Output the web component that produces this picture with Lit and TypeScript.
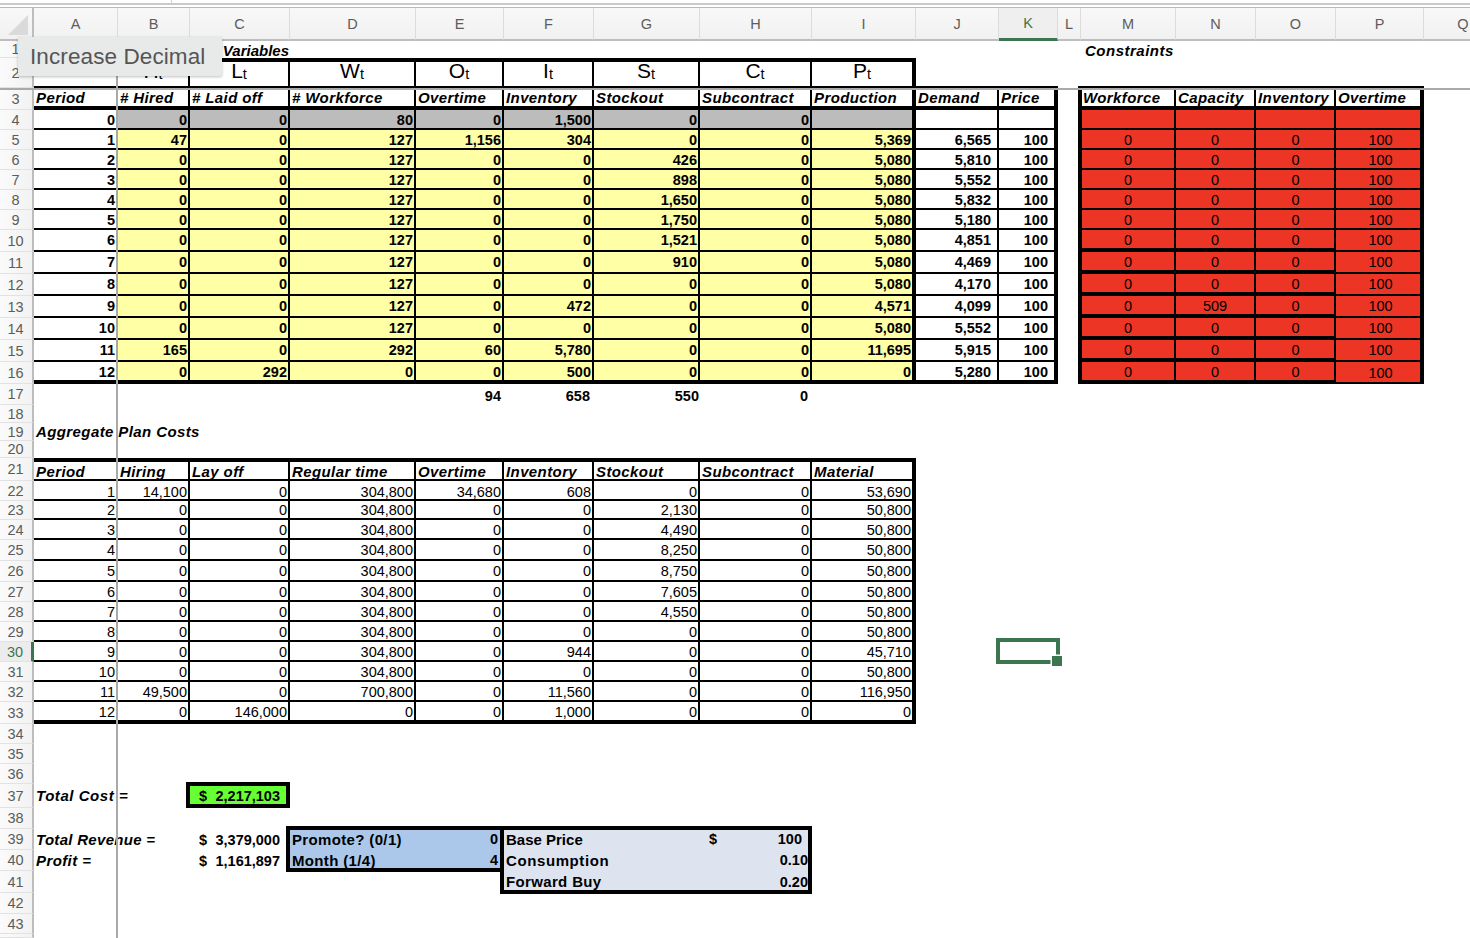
import { LitElement, html, css } from "lit";
import { customElement } from "lit/decorators.js";

const colEdges = [0, 34, 118, 190, 290, 416, 504, 594, 700, 812, 916, 999, 1058, 1081, 1176, 1256, 1336, 1424, 1503];
const rowEdges = [0, 8, 41, 58, 88, 110, 130, 150, 170, 190, 210, 230, 252, 274, 296, 318, 340, 362, 384, 405, 423, 441, 458, 481, 501, 520, 540, 561, 582, 602, 622, 642, 662, 682, 702, 724, 744, 764, 784, 808, 829, 850, 871, 893, 914, 934, 938];
const tpl = (e: number[]) => e.slice(1).map((v, i) => `${v - e[i]}px`).join(" ");
const colLetters = "ABCDEFGHIJKLMNOPQ".split("");
// grid helpers: col 1 = row header, col 2 = A; row 1 = strip, row 2 = col header, row 3 = sheet row 1
const gc = (c: number, span = 1) => `grid-column:${c + 2}/span ${span}`;
const gr = (r: number, span = 1) => `grid-row:${r + 2}/span ${span}`;
const fmt = (v: number | string) => (typeof v === "number" ? v.toLocaleString("en-US") : v);

const plan: (number | string)[][] = [
  [1, 47, 0, 127, 1156, 304, 0, 0, 5369, 6565, 100],
  [2, 0, 0, 127, 0, 0, 426, 0, 5080, 5810, 100],
  [3, 0, 0, 127, 0, 0, 898, 0, 5080, 5552, 100],
  [4, 0, 0, 127, 0, 0, 1650, 0, 5080, 5832, 100],
  [5, 0, 0, 127, 0, 0, 1750, 0, 5080, 5180, 100],
  [6, 0, 0, 127, 0, 0, 1521, 0, 5080, 4851, 100],
  [7, 0, 0, 127, 0, 0, 910, 0, 5080, 4469, 100],
  [8, 0, 0, 127, 0, 0, 0, 0, 5080, 4170, 100],
  [9, 0, 0, 127, 0, 472, 0, 0, 4571, 4099, 100],
  [10, 0, 0, 127, 0, 0, 0, 0, 5080, 5552, 100],
  [11, 165, 0, 292, 60, 5780, 0, 0, 11695, 5915, 100],
  [12, 0, 292, 0, 0, 500, 0, 0, 0, 5280, 100],
];
const costs: number[][] = [
  [1, 14100, 0, 304800, 34680, 608, 0, 0, 53690],
  [2, 0, 0, 304800, 0, 0, 2130, 0, 50800],
  [3, 0, 0, 304800, 0, 0, 4490, 0, 50800],
  [4, 0, 0, 304800, 0, 0, 8250, 0, 50800],
  [5, 0, 0, 304800, 0, 0, 8750, 0, 50800],
  [6, 0, 0, 304800, 0, 0, 7605, 0, 50800],
  [7, 0, 0, 304800, 0, 0, 4550, 0, 50800],
  [8, 0, 0, 304800, 0, 0, 0, 0, 50800],
  [9, 0, 0, 304800, 0, 944, 0, 0, 45710],
  [10, 0, 0, 304800, 0, 0, 0, 0, 50800],
  [11, 49500, 0, 700800, 0, 11560, 0, 0, 116950],
  [12, 0, 146000, 0, 0, 1000, 0, 0, 0],
];

@customElement("app-root")
export class AppRoot extends LitElement {
  static styles = css`
    :host { display: block; position: relative; width: 1470px; height: 938px; overflow: hidden; background: #fff; font-family: "Liberation Sans", Arial, sans-serif; color: #000; }
    .sheet { display: grid; width: 1503px; height: 938px; }
    .strip { grid-column: 1 / -1; grid-row: 1; background: #fff; box-sizing: border-box; }
    .strip-tick { width: 172px; height: 3px; box-sizing: border-box; border-right: 1px solid #cfcfcf; }
    .strip-lines { box-sizing: border-box; border-top: 2px solid #c9c9c9; border-bottom: 1px solid #b9b9b9; height: 5px; }
    .ch { display: flex; align-items: center; justify-content: center; background: linear-gradient(#f8f8f8, #f1f1f1); border-right: 1px solid #dcdcdc; border-bottom: 2px solid #bdbdbd; box-sizing: border-box; color: #5c5c5c; font-size: 14.5px; }
    .ch.on { background: #efefef; color: #3c7650; border-bottom: 3px solid #3c7650; }
    .corner { background: linear-gradient(#f8f8f8, #f1f1f1); border-right: 2px solid #bdbdbd; border-bottom: 2px solid #bdbdbd; box-sizing: border-box; display: flex; align-items: flex-end; justify-content: flex-end; padding: 0 4px 4px 0; }
    .rh { display: flex; align-items: center; justify-content: center; background: linear-gradient(90deg, #fbfbfb, #f2f2f2); border-right: 2px solid #bdbdbd; border-bottom: 1px solid #e2e2e2; box-sizing: border-box; color: #5c5c5c; font-size: 14.5px; padding-right: 1px; }
    .rh.on { color: #3c7650; background: #ececec; border-right: 3px solid #3c7650; }
    .c { display: flex; align-items: center; min-width: 0; white-space: nowrap; box-sizing: border-box; font-size: 14.5px; line-height: 1; z-index: 1; }
    .r { justify-content: flex-end; padding-right: 1px; }
    .pa { padding-right: 3px; }
    .l { padding-left: 2px; }
    .ctr { justify-content: center; }
    .b { font-weight: 700; }
    .hd { font-weight: 700; font-style: italic; font-size: 15px; padding-left: 2px; letter-spacing: 0.4px; }
    .lin { border-right: 2px solid #000; border-bottom: 2px solid #000; padding-top: 2px; }
    .lin.top0 { padding-top: 0; }
    .lin.top4 { padding-top: 4px; }
    .hd.h3 { padding-top: 0; }
    .bb4 { border-bottom-width: 4px; }
    .br4 { border-right-width: 4px; }
    .bt4 { border-top: 4px solid #000; }
    .nor { border-right: 0; }
    .yellow { background: #ffffa6; }
    .gray { background: #bcbcbc; }
    .red { background: #ec3524; }
    .sym { font-size: 21px; font-weight: 400; justify-content: center; align-items: flex-end; padding: 0 0 5px; line-height: 1; }
    .sym span { font-size: 14.5px; }
    .pj { padding-right: 6px; }
    .pk { padding-right: 6px; }
    .ppl { padding-left: 1px; }
    .top1 { padding-top: 1px; }
    .acct.top1 { padding-top: 2px; }
    .top2 { padding-top: 4px; }
    .up { padding-bottom: 2px; }
    .wide { letter-spacing: 0.55px; }
    .lean { letter-spacing: 0.3px; }
    .plain { letter-spacing: 0; padding-right: 1px; }
    .cons { letter-spacing: 0.5px; padding-left: 4px; }
    .p3 { padding-right: 3px; }
    .p4 { padding-right: 4px; }
    .frame { box-sizing: border-box; border: 4px solid #000; z-index: 2; pointer-events: none; }
    .f-red { margin: -2px 0 0 -3px; border-top-width: 3px; border-bottom-width: 2px; }
    .block { box-sizing: border-box; border: 4px solid #000; z-index: 0; }
    .green { background: #66ff33; margin: -2px 0 0 -4px; }
    .blue { background: #abc8ea; margin: -3px 0 -1px -4px; }
    .pale { background: #dde4f0; margin: -3px 0 -1px -4px; }
    .lab { font-weight: 700; font-size: 15px; letter-spacing: 0.35px; padding-bottom: 1px; }
    .tight { letter-spacing: 0; }
    .spaced { letter-spacing: 0.6px; }
    .acct { justify-content: space-between; padding: 0 10px 0 9px; font-weight: 700; }
    .vline { position: absolute; left: 116px; top: 41px; bottom: 0; width: 2px; background: #a9a9a9; z-index: 3; }
    .hline { position: absolute; left: 0; right: 0; top: 88px; height: 2px; background: #a9a9a9; z-index: 3; }
    .tip { position: absolute; left: 18px; top: 37px; width: 204px; height: 39px; box-sizing: border-box; background: #e8e9e9; border-radius: 2px; box-shadow: 0 1px 3px rgba(0, 0, 0, 0.25); color: #555; font-size: 22.5px; letter-spacing: 0.1px; display: flex; align-items: center; padding-left: 12px; z-index: 5; }
    .sel { position: absolute; left: 996px; top: 638px; width: 64px; height: 26px; box-sizing: border-box; border: 4px solid #3c7650; z-index: 4; }
    .handle { position: absolute; right: -6px; bottom: -6px; width: 10px; height: 10px; background: #3c7650; box-shadow: -1.5px -1.5px 0 #fff; }
  `;

  private cell(col: number, row: number, text: unknown, cls = "", span = 1) {
    return html`<div class="c ${cls}" style="${gc(col, span)};${gr(row)}">${text}</div>`;
  }

  render() {
    const sym = (a: string) => html`${a}<span>t</span>`;
    const syms = ["H", "L", "W", "O", "I", "S", "C", "P"];
    const h3 = ["Period", "# Hired", "# Laid off", "# Workforce", "Overtime", "Inventory", "Stockout", "Subcontract", "Production", "Demand", "Price"];
    const h3r = ["Workforce", "Capacity", "Inventory", "Overtime"];
    const h21 = ["Period", "Hiring", "Lay off", "Regular time", "Overtime", "Inventory", "Stockout", "Subcontract", "Material"];
    const row4 = [0, 0, 0, 80, 0, 1500, 0, 0, ""];
    const lastCol = 8;
    return html`
      <div class="sheet" style="grid-template-columns:${tpl(colEdges)};grid-template-rows:${tpl(rowEdges)}">
        <div class="strip"><div class="strip-tick"></div><div class="strip-lines"></div></div>
        <div class="corner" style="grid-column:1;grid-row:2">
          <svg width="20" height="20" viewBox="0 0 20 20"><path d="M20 0V20H0Z" fill="#dadada"/></svg>
        </div>
        ${colLetters.map((l, i) => html`<div class="ch ${l === "K" ? "on" : ""}" style="grid-column:${i + 2};grid-row:2">${l}</div>`)}
        ${Array.from({ length: 44 }, (_, i) => i + 1).map(
          (n) => html`<div class="rh ${n === 30 ? "on" : ""}" style="grid-column:1;grid-row:${n + 2}">${n < 44 ? n : ""}</div>`
        )}

        <!-- filled blocks behind the text -->
        <div class="block green" style="${gc(2)};${gr(37)}"></div>
        <div class="block blue" style="${gc(3, 2)};${gr(39, 2)}"></div>
        <div class="block pale" style="${gc(5, 3)};${gr(39, 3)}"></div>

        <!-- row 1 -->
        ${this.cell(0, 1, "Variables", "hd r plain top1", 3)}
        ${this.cell(12, 1, "Constraints", "hd cons top1", 2)}

        <!-- row 2 -->
        ${syms.map((s, i) => this.cell(i + 1, 2, sym(s), `sym lin bt4 ${i === 7 ? "br4" : ""}`))}
        ${this.cell(0, 2, "", "lin bt4 nor")}
        <div class="c" style="${gc(9, 2)};${gr(2)};border-bottom:2px solid #000"></div>

        <!-- row 3 -->
        ${h3.map((t, i) => this.cell(i, 3, t, `hd h3 lin bb4 ${i === 0 ? "nor" : ""} ${i === 8 || i === 10 ? "br4" : ""}`))}
        ${h3r.map((t, i) => this.cell(12 + i, 3, t, `hd h3 lin bb4 ${i === 3 ? "nor" : ""}`))}

        <!-- row 4 -->
        ${row4.map((v, i) =>
          this.cell(i, 4, fmt(v), `r b lin ${i === 0 ? "nor pa" : "gray"} ${i === lastCol ? "br4" : ""}`)
        )}
        ${this.cell(9, 4, "", "lin")}
        ${this.cell(10, 4, "", "lin br4")}
        ${[0, 1, 2, 3].map((i) => this.cell(12 + i, 4, "", `red lin ${i === 3 ? "nor" : ""}`))}

        <!-- rows 5 to 16 -->
        ${plan.map((vals, ri) => {
          const row = ri + 5;
          const last = ri === 11 ? "bb4" : "";
          const heavy = row >= 10 ? "bb4" : "";
          const tall = row >= 10 && row < 16 ? "top0" : "";
          return html`
            ${vals.map((v, i) => {
              if (i === 0) return this.cell(i, row, fmt(v), `r b lin nor pa ${last} ${tall}`);
              if (i === 8) return this.cell(i, row, fmt(v), `r b lin yellow br4 ${last} ${tall}`);
              if (i === 9) return this.cell(i, row, fmt(v), `r b lin pj ${last} ${tall}`);
              if (i === 10) return this.cell(i, row, fmt(v), `r b lin br4 pk ${last} ${tall}`);
              return this.cell(i, row, fmt(v), `r b lin yellow ${last} ${tall}`);
            })}
            ${this.cell(12, row, "0", `ctr red lin ppl ${heavy}`)}
            ${this.cell(13, row, row === 13 ? "509" : "0", `ctr red lin ${heavy}`)}
            ${this.cell(14, row, "0", `ctr red lin ppl ${heavy}`)}
            ${this.cell(15, row, "100", `ctr red lin nor ppl ${tall}`)}
          `;
        })}
        <div class="frame f-red" style="${gc(12, 4)};${gr(3, 14)}"></div>

        <!-- row 17 totals -->
        ${this.cell(4, 17, "94", "r b p3 top2")}
        ${this.cell(5, 17, "658", "r b p4 top2")}
        ${this.cell(6, 17, "550", "r b top2")}
        ${this.cell(7, 17, "0", "r b p4 top2")}

        ${this.cell(0, 19, "Aggregate Plan Costs", "hd up", 4)}

        <!-- cost table -->
        ${h21.map((t, i) => this.cell(i, 21, t, `hd lin bt4 ${i === 0 ? "nor" : ""} ${i === 8 ? "br4" : ""}`))}
        ${costs.map(
          (vals, ri) => html`${vals.map((v, i) =>
            this.cell(i, ri + 22, fmt(v), `r lin ${i === 0 ? "nor pa" : ""} ${i === 8 ? "br4" : ""} ${ri === 11 ? "bb4" : ""} ${ri === 0 ? "top4" : ""}`)
          )}`
        )}

        <!-- totals -->
        ${this.cell(0, 37, "Total Cost =", "hd wide up", 2)}
        ${this.cell(2, 37, html`<span>$</span><span>2,217,103</span>`, "acct")}
        ${this.cell(0, 39, "Total Revenue =", "hd lean", 2)}
        ${this.cell(2, 39, html`<span>$</span><span>3,379,000</span>`, "acct top1")}
        ${this.cell(0, 40, "Profit =", "hd", 2)}
        ${this.cell(2, 40, html`<span>$</span><span>1,161,897</span>`, "acct top1")}

        ${this.cell(3, 39, "Promote? (0/1)", "lab l")}
        ${this.cell(4, 39, "0", "r b pj")}
        ${this.cell(3, 40, "Month (1/4)", "lab l")}
        ${this.cell(4, 40, "4", "r b pj")}

        ${this.cell(5, 39, "Base Price", "lab l tight")}
        ${this.cell(7, 39, html`<span>$</span><span>100</span>`, "acct")}
        ${this.cell(5, 40, "Consumption", "lab l spaced", 2)}
        ${this.cell(7, 40, "0.10", "r b p4")}
        ${this.cell(5, 41, "Forward Buy", "lab l", 2)}
        ${this.cell(7, 41, "0.20", "r b p4")}
      </div>
      <div class="vline"></div>
      <div class="hline"></div>
      <div class="sel"><div class="handle"></div></div>
      <div class="tip">Increase Decimal</div>
    `;
  }
}
